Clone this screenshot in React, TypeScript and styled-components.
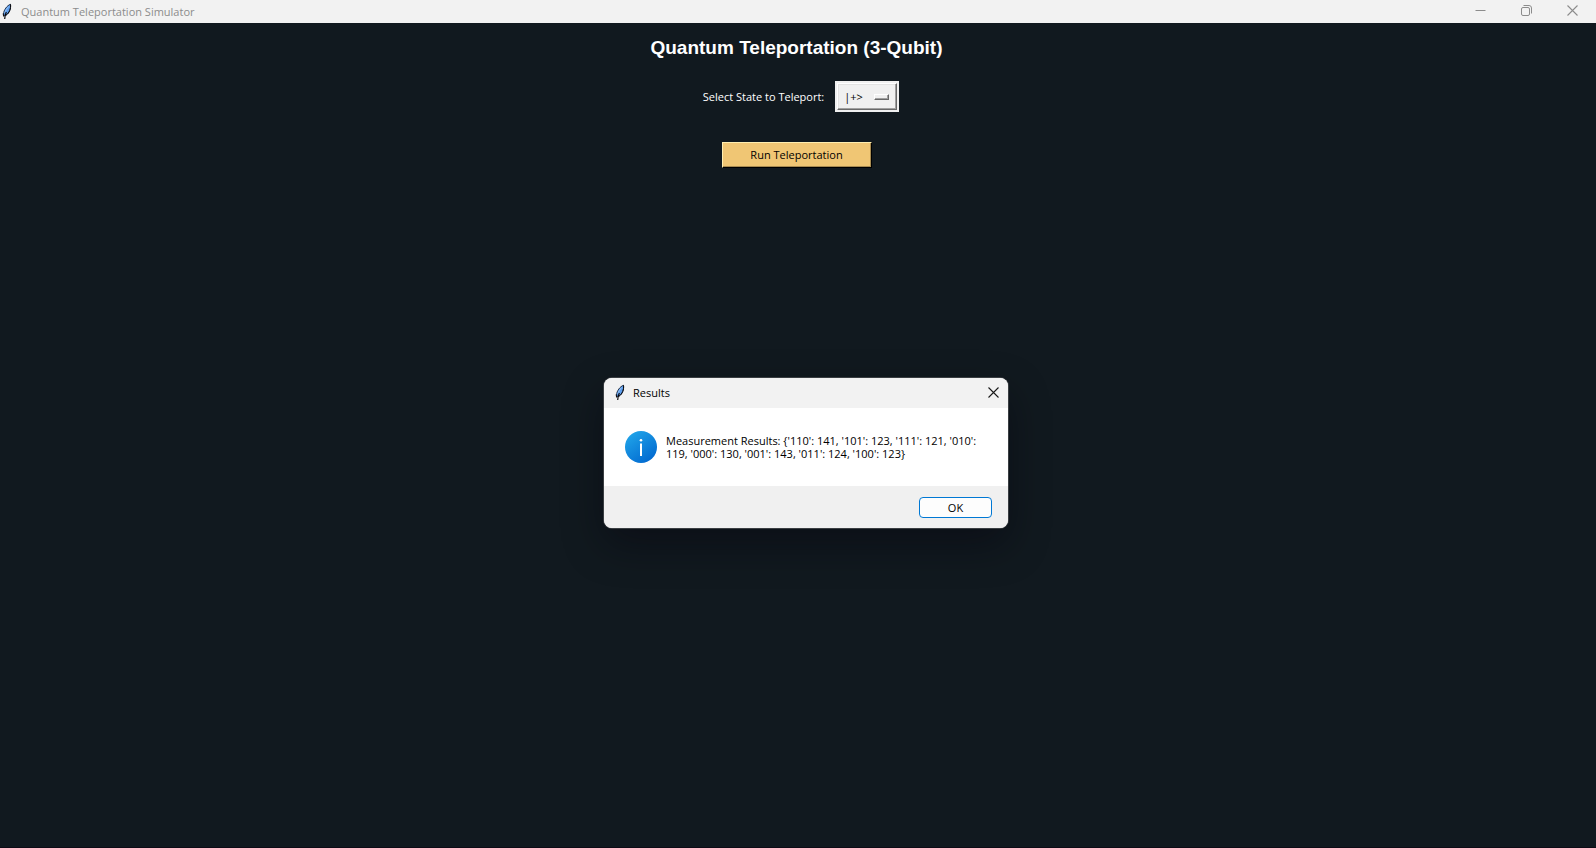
import React, { useState } from "react";
import styled, { createGlobalStyle } from "styled-components";

const GlobalStyle = createGlobalStyle`
  * { box-sizing: border-box; }
  body {
    margin: 0;
    background: #11191f;
    font-family: "Open Sans", "Noto Sans", sans-serif;
    font-size: 11px;
  }
  button, select { font: inherit; color: inherit; }
`;

const AppWindow = styled.div`
  display: flex;
  flex-direction: column;
  min-height: 100vh;
  background: #11191f;
  border-bottom: 1px solid #0d0b15;
`;

const TitleBar = styled.header`
  display: flex;
  align-items: center;
  gap: 8px;
  height: 23px;
  padding: 0 12px 0 2px;
  background: #f2f2f2;
  color: #8c8c8c;
`;

const WindowTitle = styled.span`
  flex: 1;
  line-height: 16px;
`;

const CaptionButtons = styled.div`
  display: flex;
  gap: 22px;
  padding-bottom: 3px;
`;

const CaptionButton = styled.button`
  display: grid;
  place-items: center;
  width: 24px;
  height: 20px;
  padding: 0;
  border: 0;
  background: none;
`;

const Content = styled.main`
  display: flex;
  flex-direction: column;
  align-items: center;
  padding: 13px 3px 0 0;
`;

const Heading = styled.h1`
  margin: 0;
  font: bold 19px/24px "Liberation Sans", Arial, sans-serif;
  color: #fff;
`;

const StateRow = styled.div`
  display: flex;
  align-items: center;
  gap: 11px;
  margin-top: 21px;
  padding-left: 9px;
  color: #fff;
`;

const StateLabel = styled.label`
  line-height: 16px;
`;

const OptionMenu = styled.div`
  display: grid;
  width: 64px;
  height: 31px;
  border: 2px solid #f0f0f0;
  color: #000;
  & > * { grid-area: 1 / 1; }
`;

const StateSelect = styled.select`
  appearance: none;
  padding: 0 0 0 6px;
  border: 1px solid;
  border-color: #fff #696969 #696969 #fff;
  border-radius: 0;
  background: #f0f0f0;
  box-shadow: inset -1px -1px #a0a0a0, inset 1px 1px #e3e3e3;
  outline: none;
`;

const MenuIndicator = styled.span`
  place-self: center end;
  width: 15px;
  height: 6px;
  margin-right: 8px;
  border: 1px solid;
  border-color: #fff #696969 #696969 #fff;
  background: #f0f0f0;
  box-shadow: inset -1px -1px #a0a0a0;
  pointer-events: none;
`;

const RunButton = styled.button`
  width: 150px;
  height: 26px;
  margin-top: 30px;
  padding: 0 0 2px;
  border: 1px solid;
  border-color: #ffeeb0 #000 #000 #ffeeb0;
  background: #f0c674;
  box-shadow: inset -1px -1px #a88b51;
  color: #000;
`;

const DialogLayer = styled.div`
  position: absolute;
  inset: 0;
  display: grid;
  place-items: center;
  padding: 58px 0 0 16px;
`;

const DialogWindow = styled.section`
  width: 404px;
  overflow: hidden;
  border-radius: 8px;
  background: #fff;
  color: #000;
  box-shadow: 0 0 0 1px #3a3e42, 0 16px 40px rgba(5, 0, 12, 0.42);
`;

const DialogTitleBar = styled.header`
  display: flex;
  align-items: center;
  gap: 7px;
  height: 30px;
  padding: 0 9px 2px 11px;
  background: #f2f2f2;
`;

const DialogTitle = styled.h2`
  flex: 1;
  margin: 0;
  padding-top: 2px;
  font-size: 11px;
  font-weight: 400;
  line-height: 16px;
`;

const DialogClose = styled.button`
  display: grid;
  place-items: center;
  width: 12px;
  height: 20px;
  padding: 0;
  border: 0;
  background: none;
`;

const DialogBody = styled.div`
  display: flex;
  align-items: center;
  gap: 9px;
  min-height: 78px;
  padding: 0 24px 0 21px;
`;

const InfoBadge = styled.svg`
  flex: none;
  width: 32px;
  height: 32px;
`;

const Message = styled.p`
  margin: 0;
  line-height: 13px;
`;

const DialogFooter = styled.footer`
  display: flex;
  justify-content: flex-end;
  padding: 11px 16px 10px;
  background: #f0f0f0;
`;

const OkButton = styled.button`
  width: 73px;
  height: 21px;
  padding: 0;
  border: 1px solid #0078d4;
  border-radius: 4px;
  background: #fdfdfd;
`;

const FeatherIcon = () => (
  <svg width="11" height="17" viewBox="0 0 11 17" aria-hidden="true">
    <path d="M8.400 1.300C5 2.600 1.800 6.800 1.500 11l1 1.800 1.700-.7C7 10.500 9.200 5.500 8.400 1.300Z" fill="#5b9cec" stroke="#25344c" strokeWidth="1" strokeLinejoin="round" />
    <path d="M6.800 3.500C5 5.200 3.500 7.500 2.900 10" stroke="#9cc8fb" strokeWidth="1" fill="none" />
    <path d="M8.500 1.300C9.200 5.500 7.200 10 4.200 12" stroke="#08080c" strokeWidth="1" fill="none" />
    <path d="M4.300 9C3.500 11 2.900 13 2.700 16" stroke="#08080c" strokeWidth="1.200" fill="none" />
    <path d="M1.200 10.500 1.600 13.500" stroke="#08080c" strokeWidth="1" />
  </svg>
);

const CloseIcon = ({ color }: { color: string }) => (
  <svg width="11" height="11" viewBox="0 0 11 11" aria-hidden="true">
    <path d="M.5.5l10 10M10.500.500l-10 10" stroke={color} strokeWidth="1.100" />
  </svg>
);

const InfoIcon = () => (
  <InfoBadge viewBox="0 0 32 32" aria-hidden="true">
    <defs>
      <linearGradient id="infoFill" x1="0.150" y1="0.100" x2="0.800" y2="1">
        <stop offset="0" stopColor="#1fa2e8" />
        <stop offset="1" stopColor="#0067cf" />
      </linearGradient>
    </defs>
    <circle cx="16" cy="16" r="16" fill="url(#infoFill)" />
    <circle cx="16" cy="9.200" r="1.300" fill="#fff" />
    <path d="M16 12.500v12.500" stroke="#fff" strokeWidth="2" />
  </InfoBadge>
);

const results =
  "{'110': 141, '101': 123, '111': 121, '010': 119, '000': 130, '001': 143, '011': 124, '100': 123}";

export default function App() {
  const [state, setState] = useState("|+>");
  const [open, setOpen] = useState(true);

  return (
    <AppWindow>
      <GlobalStyle />
      <TitleBar>
        <FeatherIcon />
        <WindowTitle>Quantum Teleportation Simulator</WindowTitle>
        <CaptionButtons>
          <CaptionButton aria-label="Minimize">
            <svg width="11" height="11" viewBox="0 0 11 11">
              <path d="M.5 5.500h10" stroke="#8c8c8c" />
            </svg>
          </CaptionButton>
          <CaptionButton aria-label="Restore">
            <svg width="11" height="11" viewBox="0 0 11 11" fill="none" stroke="#8c8c8c">
              <rect x="0.500" y="2.500" width="8" height="8" rx="1.500" />
              <path d="M2.500 .5H8a2.500 2.500 0 0 1 2.500 2.500v5.500" />
            </svg>
          </CaptionButton>
          <CaptionButton aria-label="Close">
            <CloseIcon color="#8c8c8c" />
          </CaptionButton>
        </CaptionButtons>
      </TitleBar>

      <Content>
        <Heading>Quantum Teleportation (3-Qubit)</Heading>
        <StateRow>
          <StateLabel htmlFor="state">Select State to Teleport:</StateLabel>
          <OptionMenu>
            <StateSelect id="state" value={state} onChange={(e) => setState(e.target.value)}>
              <option>|+&gt;</option>
              <option>|0&gt;</option>
              <option>|1&gt;</option>
              <option>|-&gt;</option>
            </StateSelect>
            <MenuIndicator />
          </OptionMenu>
        </StateRow>
        <RunButton onClick={() => setOpen(true)}>Run Teleportation</RunButton>
      </Content>

      {open && (
        <DialogLayer>
          <DialogWindow role="dialog" aria-labelledby="results-title">
            <DialogTitleBar>
              <FeatherIcon />
              <DialogTitle id="results-title">Results</DialogTitle>
              <DialogClose aria-label="Close results" onClick={() => setOpen(false)}>
                <CloseIcon color="#1a1a1a" />
              </DialogClose>
            </DialogTitleBar>
            <DialogBody>
              <InfoIcon />
              <Message>{`Measurement Results: ${results}`}</Message>
            </DialogBody>
            <DialogFooter>
              <OkButton onClick={() => setOpen(false)}>OK</OkButton>
            </DialogFooter>
          </DialogWindow>
        </DialogLayer>
      )}
    </AppWindow>
  );
}
